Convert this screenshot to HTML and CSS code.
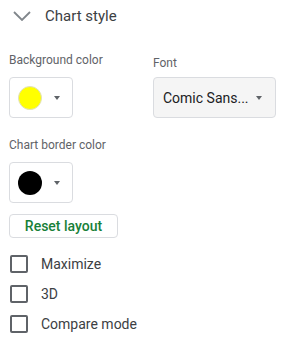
FILE: index.html
```html
<!DOCTYPE html>
<html lang="en">
<head>
    <meta charset="UTF-8">
    <title>Chart style</title>
    <link rel="stylesheet" href="styles.css">
</head>
<body>
    <div class="panel">
        <div class="section-head">
            <svg class="chevron" width="18" height="10" viewBox="0 0 18 10">
                <path d="M1 1 L9 9 L17 1" fill="none" stroke="#80868b" stroke-width="1.8"/>
            </svg>
            <span class="section-title">Chart style</span>
        </div>

        <div class="row-two">
            <div class="field">
                <div class="label">Background color</div>
                <div class="color-btn">
                    <span class="swatch swatch-yellow"></span>
                    <span class="arrow"></span>
                </div>
            </div>
            <div class="field">
                <div class="label label-font">Font</div>
                <div class="select">
                    <span class="select-text">Comic Sans...</span>
                    <span class="arrow"></span>
                </div>
            </div>
        </div>

        <div class="field">
            <div class="label">Chart border color</div>
            <div class="color-btn">
                <span class="swatch swatch-black"></span>
                <span class="arrow"></span>
            </div>
        </div>

        <div class="reset-btn">Reset layout</div>

        <div class="checks">
            <label class="check"><span class="box"></span>Maximize</label>
            <label class="check"><span class="box"></span>3D</label>
            <label class="check"><span class="box"></span>Compare mode</label>
        </div>
    </div>
</body>
</html>
```

FILE: styles.css
```css
body {
    margin: 0;
    background: #fff;
    font-family: Roboto, "Liberation Sans", Arial, sans-serif;
    color: #3c4043;
}
.panel {
    padding: 0 12px 0 9px;
}
/* header */
.section-head {
    display: flex;
    align-items: center;
    height: 32px;
    padding-left: 4px;
}
.chevron {
    display: block;
    margin-top: -1px;
}
.section-title {
    margin-left: 14px;
    font-size: 15px;
    color: #3c4043;
}
/* fields */
.row-two {
    display: grid;
    grid-template-columns: 144px 1fr;
    margin-top: 20px;
}
.field {
    display: flex;
    flex-direction: column;
}
.label {
    font-size: 12px;
    line-height: 16px;
    color: #5f6368;
    margin-bottom: 9px;
}
.label-font {
    margin-top: 3px;
    margin-bottom: 6px;
}
.row-two + .field {
    margin-top: 19px;
}
.color-btn {
    box-sizing: border-box;
    width: 64px;
    height: 41px;
    border: 1px solid #dadce0;
    border-radius: 4px;
    display: flex;
    align-items: center;
    padding-left: 8px;
}
.swatch {
    width: 24px;
    height: 24px;
    border-radius: 50%;
    box-sizing: border-box;
}
.swatch-yellow {
    background: #ffff00;
    border: 1px solid #e0e0c0;
}
.swatch-black {
    background: #000;
}
.arrow {
    width: 0;
    height: 0;
    border-left: 3.5px solid transparent;
    border-right: 3.5px solid transparent;
    border-top: 4px solid #5f6368;
}
.color-btn .arrow {
    margin-left: 12px;
}
.select {
    box-sizing: border-box;
    height: 41px;
    border: 1px solid #dadce0;
    border-radius: 4px;
    background: #f5f5f5;
    display: flex;
    align-items: center;
    justify-content: space-between;
    padding: 0 13px 0 9px;
}
.select-text {
    font-size: 14px;
    color: #202124;
}
/* reset */
.reset-btn {
    box-sizing: border-box;
    width: 109px;
    height: 24px;
    margin-top: 11px;
    border: 1px solid #dadce0;
    border-radius: 4px;
    display: flex;
    align-items: center;
    justify-content: center;
    font-size: 14px;
    font-weight: 500;
    color: #188038;
}
/* checkboxes */
.checks {
    display: flex;
    flex-direction: column;
    gap: 12px;
    margin-top: 17px;
}
.check {
    display: flex;
    align-items: center;
    font-size: 14px;
    color: #3c4043;
}
.box {
    box-sizing: border-box;
    width: 18px;
    height: 18px;
    border: 2px solid #5f6368;
    border-radius: 2px;
    margin-left: 1px;
    margin-right: 13px;
}
```
